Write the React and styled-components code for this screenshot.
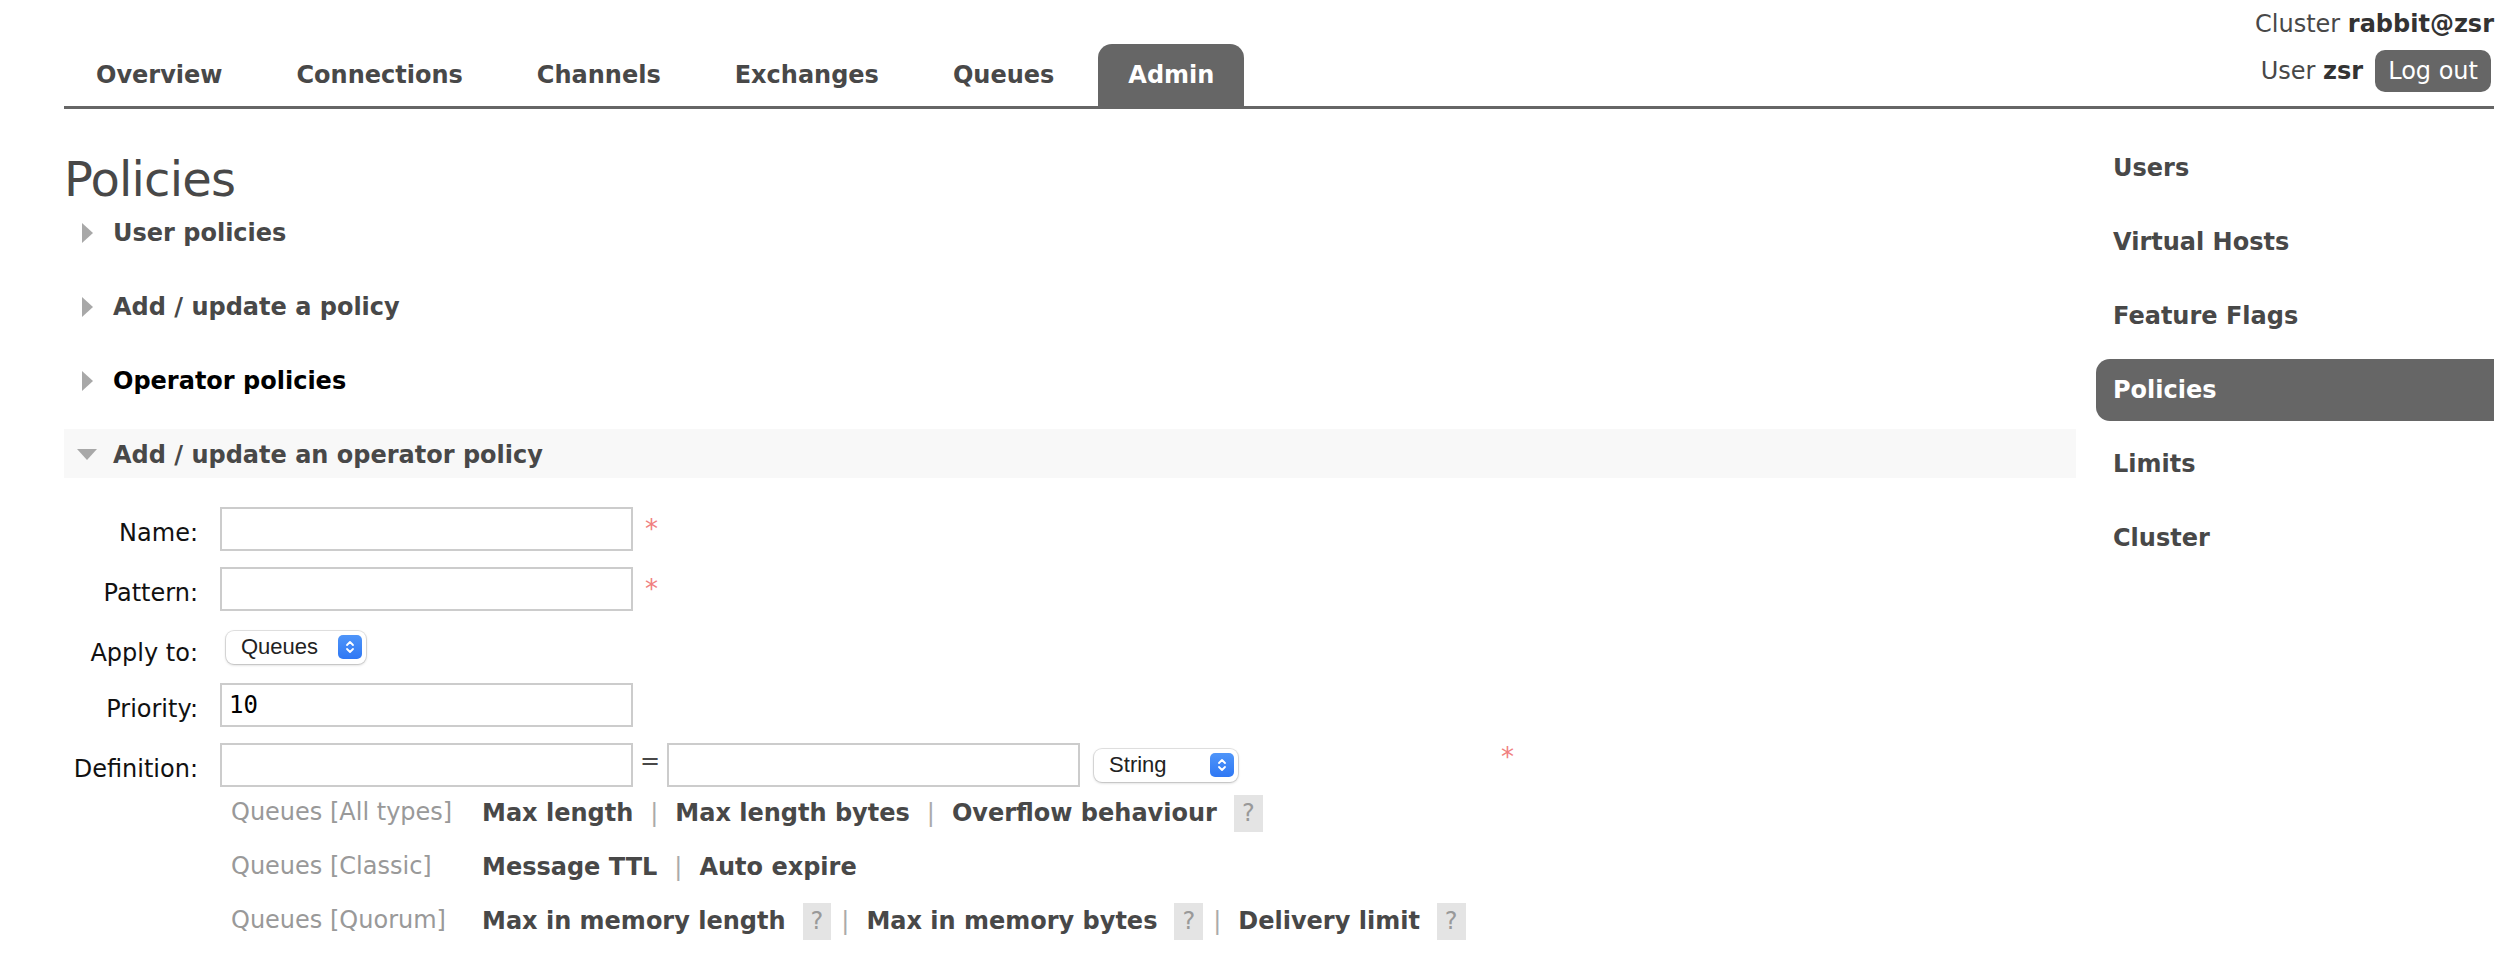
import React from 'react'
import styled, { createGlobalStyle } from 'styled-components'

const tabs = ['Overview', 'Connections', 'Channels', 'Exchanges', 'Queues', 'Admin']
const adminLinks = ['Users', 'Virtual Hosts', 'Feature Flags', 'Policies', 'Limits', 'Cluster']
const sections = [
    { title: 'User policies', open: false },
    { title: 'Add / update a policy', open: false },
    { title: 'Operator policies', open: false, dark: true },
    { title: 'Add / update an operator policy', open: true },
]
const hints = [
    { group: 'Queues [All types]', items: [{ name: 'Max length' }, { name: 'Max length bytes' }, { name: 'Overflow behaviour', help: true }] },
    { group: 'Queues [Classic]', items: [{ name: 'Message TTL' }, { name: 'Auto expire' }] },
    { group: 'Queues [Quorum]', items: [{ name: 'Max in memory length', help: true }, { name: 'Max in memory bytes', help: true }, { name: 'Delivery limit', help: true }] },
]

function Chevrons() {
    return (
        <ChevronBox>
            <svg width="12" height="16" viewBox="0 0 12 16" fill="none" stroke="#fff" strokeWidth="1.8" strokeLinecap="round" strokeLinejoin="round">
                <path d="M3 6 L6 3 L9 6" />
                <path d="M3 10 L6 13 L9 10" />
            </svg>
        </ChevronBox>
    )
}

function Select({ value, width }) {
    return (
        <SelectBox $width={width}>
            <span>{value}</span>
            <Chevrons />
        </SelectBox>
    )
}

function Arrow({ open }) {
    return (
        <ArrowBox>
            {open ? (
                <svg width="20" height="11" viewBox="0 0 20 11"><path d="M0 0 H20 L10 11 Z" fill="#a8a8a8" /></svg>
            ) : (
                <svg width="11" height="20" viewBox="0 0 11 20"><path d="M0 0 L11 10 L0 20 Z" fill="#a8a8a8" /></svg>
            )}
        </ArrowBox>
    )
}

function App() {
    return (
        <Page>
            <GlobalStyle />
            <Header>
                <Menu>
                    {tabs.map(t => (
                        <Tab key={t} $active={t === 'Admin'}>{t}</Tab>
                    ))}
                </Menu>
                <LoginInfo>
                    <div>Cluster <b>rabbit@zsr</b></div>
                    <UserLine>
                        <span>User <b>zsr</b></span>
                        <LogoutButton>Log out</LogoutButton>
                    </UserLine>
                </LoginInfo>
            </Header>

            <Body>
                <Main>
                    <Title>Policies</Title>
                    {sections.map(s => (
                        <SectionHeader key={s.title} $open={s.open} $dark={s.dark}>
                            <Arrow open={s.open} />
                            {s.title}
                        </SectionHeader>
                    ))}

                    <FormGrid>
                        <Label>Name:</Label>
                        <Field>
                            <TextInput />
                            <Required>*</Required>
                        </Field>
                        <Label>Pattern:</Label>
                        <Field>
                            <TextInput />
                            <Required>*</Required>
                        </Field>
                        <Label>Apply to:</Label>
                        <Field>
                            <SelectWrap $left={6}><Select value="Queues" width={140} /></SelectWrap>
                        </Field>
                        <Label>Priority:</Label>
                        <Field>
                            <TextInput defaultValue="10" />
                        </Field>
                        <Label>Definition:</Label>
                        <Field>
                            <TextInput />
                            <Equals>=</Equals>
                            <TextInput />
                            <SelectWrap $left={14}><Select value="String" width={144} /></SelectWrap>
                            <Required $far>*</Required>
                        </Field>
                    </FormGrid>

                    <Hints>
                        {hints.map(h => (
                            <HintRow key={h.group}>
                                <HintGroup>{h.group}</HintGroup>
                                {h.items.map((item, i) => (
                                    <React.Fragment key={item.name}>
                                        {i > 0 && <Sep $tight={h.items[i - 1].help}>|</Sep>}
                                        <HintLink>{item.name}</HintLink>
                                        {item.help && <Help>?</Help>}
                                    </React.Fragment>
                                ))}
                            </HintRow>
                        ))}
                    </Hints>
                </Main>

                <Sidebar>
                    {adminLinks.map(l => (
                        <SideItem key={l} $active={l === 'Policies'}>{l}</SideItem>
                    ))}
                </Sidebar>
            </Body>
        </Page>
    )
}

const GlobalStyle = createGlobalStyle`
body {
    margin: 0;
    background: #fff;
    font-family: "DejaVu Sans", Verdana, sans-serif;
    font-size: 24px;
    color: #484848;
}
`

const Page = styled.div`
padding: 0 26px 0 64px;
`

const Header = styled.div`
display: flex;
justify-content: space-between;
height: 106px;
border-bottom: 3px solid #666;
`

const Menu = styled.ul`
display: flex;
list-style: none;
margin: 0;
padding: 44px 0 0 2px;
`

const Tab = styled.li`
height: 62px;
padding: 0 30px;
margin-right: 14px;
display: flex;
align-items: center;
font-weight: bold;
border-radius: 14px 14px 0 0;
background: ${p => p.$active ? '#666' : 'transparent'};
color: ${p => p.$active ? '#fff' : '#484848'};
`

const LoginInfo = styled.div`
padding-top: 9px;
line-height: 30px;
text-align: right;
b {
    color: #333;
}
`

const UserLine = styled.div`
display: flex;
justify-content: flex-end;
align-items: center;
margin-top: 11px;
`

const LogoutButton = styled.button`
height: 42px;
margin-left: 12px;
margin-right: 3px;
padding: 0 13px;
border: none;
border-radius: 10px;
background: #666;
color: #fff;
font-family: inherit;
font-size: 24px;
`

const Body = styled.div`
display: flex;
align-items: flex-start;
`

const Main = styled.div`
flex: 1;
`

const Title = styled.h1`
margin: 42px 0 0;
font-size: 48px;
line-height: 56px;
font-weight: normal;
letter-spacing: -0.8px;
color: #484848;
`

const SectionHeader = styled.div`
display: flex;
align-items: center;
height: 49px;
box-sizing: border-box;
padding: 2px 0 0 12px;
margin-bottom: 25px;
line-height: 28px;
font-weight: bold;
color: ${p => p.$dark ? '#000' : '#484848'};
background: ${p => p.$open ? '#f8f8f8' : 'transparent'};
`

const ArrowBox = styled.span`
width: 22px;
height: 22px;
margin-right: 15px;
display: flex;
align-items: center;
justify-content: center;
`

const FormGrid = styled.div`
display: grid;
grid-template-columns: 156px auto;
row-gap: 16px;
margin-top: 29px;
`

const Label = styled.div`
padding: 12px 22px 0 0;
line-height: 28px;
text-align: right;
color: #111;
`

const Field = styled.div`
display: flex;
align-items: center;
`

const TextInput = styled.input`
width: 413px;
height: 44px;
box-sizing: border-box;
border: 2px solid #ccc;
padding: 0 7px;
font-family: "DejaVu Sans Mono", monospace;
font-size: 24px;
color: #000;
outline: none;
`

const Required = styled.span`
align-self: flex-start;
padding-top: ${p => p.$far ? '0' : '8px'};
margin-left: ${p => p.$far ? '263px' : '12px'};
line-height: 28px;
font-size: 26px;
color: #f08080;
`

const Equals = styled.span`
align-self: flex-start;
padding-top: 4px;
margin: 0 7px;
line-height: 28px;
color: #484848;
`

const SelectWrap = styled.div`
margin-left: ${p => p.$left}px;
display: flex;
`

const SelectBox = styled.div`
width: ${p => p.$width}px;
height: 33px;
box-sizing: border-box;
display: flex;
align-items: center;
justify-content: space-between;
padding: 0 4px 0 15px;
border-radius: 8px;
background: #fff;
box-shadow: 0 0 0 1px rgba(0, 0, 0, 0.1), 0 1px 3px rgba(0, 0, 0, 0.2);
font-family: "Liberation Sans", Arial, sans-serif;
font-size: 22px;
color: #222;
`

const ChevronBox = styled.span`
width: 24px;
height: 24px;
border-radius: 5px;
background: linear-gradient(#4f95f9, #2f78f4);
display: flex;
align-items: center;
justify-content: center;
`

const Hints = styled.div`
margin: 8px 0 0 167px;
`

const HintRow = styled.div`
display: flex;
align-items: flex-start;
height: 37px;
margin-bottom: 17px;
`

const HintGroup = styled.span`
width: 251px;
padding-top: 3px;
line-height: 28px;
color: #999;
`

const HintLink = styled.span`
line-height: 37px;
font-weight: bold;
color: #484848;
`

const Help = styled.span`
margin-left: 17px;
padding: 0 8px;
line-height: 37px;
background: #e4e4e4;
color: #999;
`

const Sep = styled.span`
margin: 0 17px 0 ${p => p.$tight ? '10px' : '17px'};
line-height: 37px;
color: #aaa;
`

const Sidebar = styled.ul`
width: 398px;
margin: 0 0 0 20px;
padding: 28px 0 0;
list-style: none;
`

const SideItem = styled.li`
height: 62px;
margin-bottom: 12px;
padding-left: 17px;
display: flex;
align-items: center;
font-weight: bold;
border-radius: 14px 0 0 14px;
background: ${p => p.$active ? '#666' : 'transparent'};
color: ${p => p.$active ? '#fff' : '#484848'};
`

export default App
